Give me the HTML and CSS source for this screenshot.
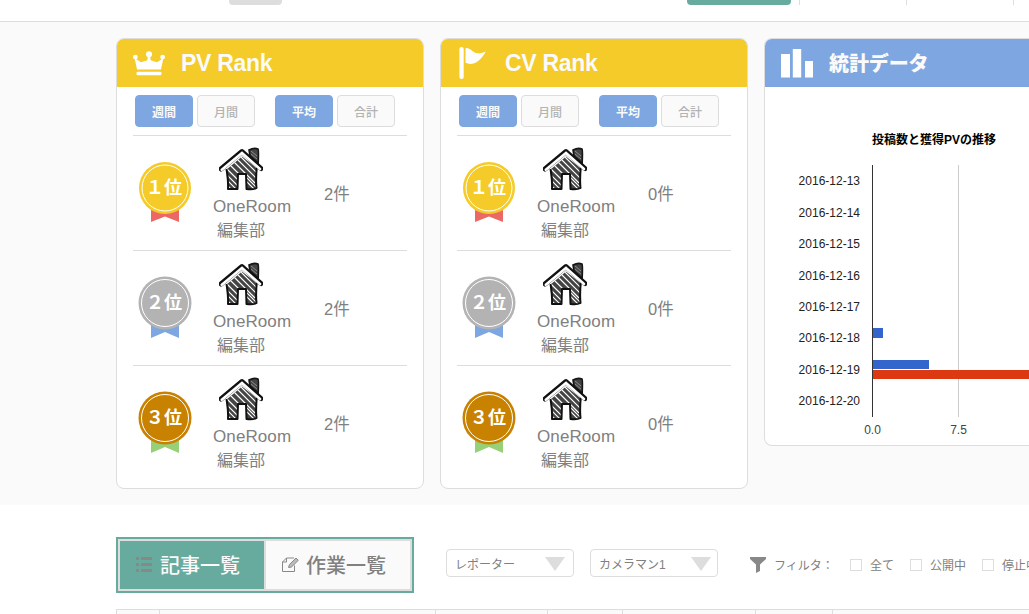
FILE: index.html
```html
<!DOCTYPE html>
<html lang="ja">
<head>
<meta charset="utf-8">
<title>OneRoom</title>
<link rel="stylesheet" href="styles.css">
</head>
<body>
<svg class="defs" aria-hidden="true">
  <clipPath id="walls"><path d="M7 23 L23 9.500 L37.500 21 L38 42 L27.500 42 L27 27 L19 27 L18.500 42 L9 42Z"/></clipPath>
  <symbol id="house" viewBox="0 0 44 44">
    <path d="M30 3 Q35 .3 39 2 Q39.800 3 39.200 16 L31 9Z" fill="#444" stroke="#161616" stroke-width="1.600"/>
    <path d="M32 4l6 5M32 7l6 5" stroke="#aaa" stroke-width=".7"/>
    <path d="M7 23 L23 9.500 L37.500 21 L38 42 L27.500 42 L27 27 L19 27 L18.500 42 L9 42Z" fill="#444"/>
    <path clip-path="url(#walls)" d="M4 34l14 14M4 29l16 16M5 25l16 16M8 22l16 16M11 18l16 16M14 14l22 22M18 12l22 22M21 9l22 22M24 7l20 20M24 31l14 14M24 27l18 18" stroke="#fff" stroke-width="1.100"/>
    <path d="M7.500 22 Q9.500 32 9 42 L18.500 42 L19 27 L27 27 L27.500 42 Q34 43 37.500 41 Q36.500 31 38 19" fill="none" stroke="#111" stroke-width="2" stroke-linejoin="round"/>
    <path d="M2 22 L23 4.500 L42 21.500" fill="none" stroke="#111" stroke-width="5" stroke-linecap="round" stroke-linejoin="round"/>
    <path d="M2.800 22.800 L23 6 L41 22" fill="none" stroke="#fff" stroke-width="2.600" stroke-linecap="round"/>
  </symbol>
</svg>

<header class="topbar">
  <i class="stub stub-grey"></i>
  <i class="stub stub-green"></i>
  <i class="sep"></i><i class="sep"></i><i class="sep"></i>
</header>

<section class="dashboard">
  <article class="card">
    <h2 class="card-head yellow">
      <svg class="head-icon" viewBox="0 0 32 32" fill="#fff"><path d="M4 22.400 1.600 11 8 15.200 14.400 13.200 15 7 17 7 17.600 13.200 24 15.200 30.400 11 28 22.400Z"/><circle cx="2.400" cy="10.100" r="2.400"/><circle cx="16" cy="7.200" r="3"/><circle cx="29.600" cy="10.100" r="2.400"/><rect x="3.500" y="24.700" width="25" height="3.600" rx="1.300"/></svg>
      <span>PV Rank</span>
    </h2>
    <div class="switches"><b class="on">週間</b><b>月間</b><b class="on second">平均</b><b>合計</b></div>
    <ul class="ranks">
      <li class="rank">
        <svg class="medal" viewBox="0 0 54 64"><path d="M13 48V61L27 55.500 41 61V48Z" fill="#ec6864"/><circle cx="27" cy="27" r="26" fill="#f4cb28"/><circle cx="27" cy="27" r="23" fill="none" stroke="#fff" stroke-width="1"/><text x="8" y="33.200">１</text><text x="26" y="33.200">位</text></svg>
        <div class="who"><svg class="house"><use href="#house"/></svg><span>OneRoom</span><span class="dept">編集部</span></div><span class="count">2件</span>
      </li>
      <li class="rank">
        <svg class="medal" viewBox="0 0 54 64"><path d="M13 48V62L27 56 41 62V48Z" fill="#7ea6e0"/><circle cx="27" cy="27" r="26.500" fill="#b3b3b3"/><circle cx="27" cy="27" r="23.500" fill="none" stroke="#fff" stroke-width="1"/><text x="8" y="33.200">２</text><text x="26" y="33.200">位</text></svg>
        <div class="who"><svg class="house"><use href="#house"/></svg><span>OneRoom</span><span class="dept">編集部</span></div><span class="count">2件</span>
      </li>
      <li class="rank">
        <svg class="medal" viewBox="0 0 54 64"><path d="M13 48V62L27 56 41 62V48Z" fill="#97d077"/><circle cx="27" cy="27" r="26.500" fill="#c88200"/><circle cx="27" cy="27" r="23.500" fill="none" stroke="#fff" stroke-width="1"/><text x="8" y="33.200">３</text><text x="26" y="33.200">位</text></svg>
        <div class="who"><svg class="house"><use href="#house"/></svg><span>OneRoom</span><span class="dept">編集部</span></div><span class="count">2件</span>
      </li>
    </ul>
  </article>

  <article class="card">
    <h2 class="card-head yellow">
      <svg class="head-icon" viewBox="0 0 32 32" fill="#fff"><rect x="2.400" y="0" width="4.300" height="32" rx="2"/><path d="M8.500 1.500C11.500-.5 15 4.800 19 6Q24 7.300 28.800 4.600C26.500 9 23 13 19.500 15.300Q14 18.300 8.500 15.800Z"/></svg>
      <span>CV Rank</span>
    </h2>
    <div class="switches"><b class="on">週間</b><b>月間</b><b class="on second">平均</b><b>合計</b></div>
    <ul class="ranks">
      <li class="rank">
        <svg class="medal" viewBox="0 0 54 64"><path d="M13 48V61L27 55.500 41 61V48Z" fill="#ec6864"/><circle cx="27" cy="27" r="26" fill="#f4cb28"/><circle cx="27" cy="27" r="23" fill="none" stroke="#fff" stroke-width="1"/><text x="8" y="33.200">１</text><text x="26" y="33.200">位</text></svg>
        <div class="who"><svg class="house"><use href="#house"/></svg><span>OneRoom</span><span class="dept">編集部</span></div><span class="count">0件</span>
      </li>
      <li class="rank">
        <svg class="medal" viewBox="0 0 54 64"><path d="M13 48V62L27 56 41 62V48Z" fill="#7ea6e0"/><circle cx="27" cy="27" r="26.500" fill="#b3b3b3"/><circle cx="27" cy="27" r="23.500" fill="none" stroke="#fff" stroke-width="1"/><text x="8" y="33.200">２</text><text x="26" y="33.200">位</text></svg>
        <div class="who"><svg class="house"><use href="#house"/></svg><span>OneRoom</span><span class="dept">編集部</span></div><span class="count">0件</span>
      </li>
      <li class="rank">
        <svg class="medal" viewBox="0 0 54 64"><path d="M13 48V62L27 56 41 62V48Z" fill="#97d077"/><circle cx="27" cy="27" r="26.500" fill="#c88200"/><circle cx="27" cy="27" r="23.500" fill="none" stroke="#fff" stroke-width="1"/><text x="8" y="33.200">３</text><text x="26" y="33.200">位</text></svg>
        <div class="who"><svg class="house"><use href="#house"/></svg><span>OneRoom</span><span class="dept">編集部</span></div><span class="count">0件</span>
      </li>
    </ul>
  </article>

  <article class="card stats">
    <h2 class="card-head blue">
      <svg class="head-icon" viewBox="0 0 32 32" fill="#fff"><path d="M0 7h9v23.500H0zM11.800 2h8.400v28.500h-8.400zM24 14h8.300v16.500H24z"/></svg>
      <span>統計データ</span>
    </h2>
    <svg class="chart" width="264" height="357" viewBox="0 0 264 357">
      <text class="title" x="107" y="57" textLength="124">投稿数と獲得PVの推移</text>
      <path d="M193.500 78v252" stroke="#ccc"/>
      <g fill="#3366cc"><rect x="108" y="241" width="10" height="10"/><rect x="108" y="273" width="56" height="9"/></g>
      <rect x="108" y="283" width="156" height="9" fill="#dc3912"/>
      <path d="M107.500 78v252" stroke="#333"/>
      <g text-anchor="end">
        <text x="95" y="98">2016-12-13</text><text x="95" y="130">2016-12-14</text><text x="95" y="161">2016-12-15</text><text x="95" y="193">2016-12-16</text><text x="95" y="224">2016-12-17</text><text x="95" y="255">2016-12-18</text><text x="95" y="287">2016-12-19</text><text x="95" y="318">2016-12-20</text>
      </g>
      <g class="axis" text-anchor="middle"><text x="107.500" y="347">0.0</text><text x="193.500" y="347">7.5</text></g>
    </svg>
  </article>
</section>

<section class="toolbar">
  <nav class="views">
    <a class="view active"><svg width="16" height="16" viewBox="0 0 16 16" fill="#888"><path d="M0 0h3v3H0zM5 0h11v3H5zM0 6h3v3H0zM5 6h11v3H5zM0 12h3v3H0zM5 12h11v3H5z"/></svg><span>記事一覧</span></a>
    <a class="view"><svg width="17" height="16" viewBox="0 0 17 16" fill="none" stroke="#888" stroke-width="1"><path d="M12.500 8.500V14.500H.5V5L4.500 1H12M4.500 1V5H.5"/><path d="M6.500 10.500 7.500 7.500 14 1 16.300 3.300 9.500 10Z" fill="#bbb"/></svg><span>作業一覧</span></a>
  </nav>
  <div class="select"><span>レポーター</span><i class="arrow"></i></div>
  <div class="select camera"><span>カメラマン1</span><i class="arrow"></i></div>
  <div class="filters">
    <svg width="16" height="16" viewBox="0 0 16 16" fill="#888"><path d="M0 0H16V2L10 7.500V14L6 16V7.500L0 2Z"/></svg>
    <span class="filter-label">フィルタ：</span>
    <label><i class="box"></i><span>全て</span></label><label><i class="box"></i><span>公開中</span></label><label><i class="box"></i><span>停止中</span></label>
  </div>
</section>
<div class="table-head"><i></i><i></i><i></i><i></i><i></i><i></i><i></i></div>
</body>
</html>
```
FILE: styles.css
```css
* { box-sizing: border-box; }
html, body { margin: 0; width: 1029px; height: 614px; overflow: hidden; }
body { background: #fff; color: #808080; font-family: "Liberation Sans", "Noto Sans CJK JP", sans-serif; }
.defs { display: block; width: 0; height: 0; }
svg { flex: none; }
h2, ul { margin: 0; padding: 0; }

.topbar { display: flex; height: 22px; padding-left: 229px; border-bottom: 1px solid #ddd; overflow: hidden; }
.stub { flex: none; height: 5px; border-radius: 0 0 4px 4px; }
.stub-grey { width: 53px; background: #ddd; }
.stub-green { width: 104px; margin-left: 405px; background: #67ab9f; }
.sep { flex: none; width: 1px; height: 5px; margin-right: 106px; background: #ddd; }
.sep:last-child { margin-right: 0; }
.stub-green + .sep { margin-left: 8px; }

.dashboard { display: flex; align-items: flex-start; gap: 16px; height: 483px; padding: 16px 0 0 116px; background: #fafafa; overflow: hidden; }
.card { flex: none; width: 308px; height: 451px; border: 1px solid #ddd; border-radius: 8px; background: #fff; overflow: hidden; }
.stats { width: 265px; height: 408px; border-right: 0; border-radius: 8px 0 0 8px; }
.card-head { display: flex; align-items: center; gap: 16px; height: 48px; padding-left: 16px; color: #fff; font-size: 23px; font-weight: bold; line-height: 48px; }
.card-head span { color: #fafafa; letter-spacing: -.3px; }
.head-icon { width: 32px; height: 32px; }
.yellow { background: #f4cb28; }
.blue { background: #7ea6e0; }
.blue span { padding-top: 2px; font-size: 20px; letter-spacing: -.1px; font-weight: 900; }

.switches { display: flex; gap: 4px; padding: 8px 0 8px 18px; }
.switches b { width: 58px; height: 32px; border: 1px solid #ddd; border-radius: 4px; background: #fafafa; color: #b3b3b3; font-size: 12px; line-height: 34px; text-align: center; font-weight: 500; }
.switches .on { border-color: #7ea6e0; background: #7ea6e0; color: #fafafa; font-weight: bold; }
.switches .second { margin-left: 16px; }

.ranks { margin: 0 16px; list-style: none; }
.rank { display: flex; height: 115px; border-top: 1px solid #ddd; }
.medal { width: 54px; height: 64px; margin: 25px 0 0 5px; }
.medal text { fill: #fff; font: bold 18px "Noto Sans CJK JP", sans-serif; }
.who { display: flex; flex-direction: column; width: 80px; margin-left: 21px; padding-top: 11px; font-size: 17px; letter-spacing: .1px; line-height: 24px; }
.house { width: 44px; height: 44px; margin: 0 0 4px 6px; }
.dept { padding-left: 4px; font-size: 16px; letter-spacing: 0; }
.count { margin: 46px 0 0 31px; font-size: 16.5px; line-height: 24px; }

.chart { display: block; fill: #222; font-size: 12px; }
.chart .title { fill: #000; font-weight: bold; }
.axis { fill: #444; }

.toolbar { display: flex; align-items: flex-start; height: 104px; padding: 32px 0 0 116px; overflow: hidden; }
.views { display: flex; flex: none; width: 298px; height: 56px; border: 2px solid #67ab9f; outline: 2px solid #ddd; outline-offset: -4px; padding: 2px; }
.view { display: flex; align-items: center; width: 144px; height: 48px; padding-left: 16px; gap: 8px; background: #fafafa; font-size: 20px; font-weight: 500; line-height: 48px; }
.view span { padding-top: 2px; }
.view + .view { width: 146px; border-left: 2px solid #ddd; gap: 7px; }
.active { background: #67ab9f; color: #fafafa; }
.select { display: flex; flex: none; justify-content: space-between; align-items: center; width: 128px; height: 28px; margin: 12px 0 0 32px; padding: 0 8px; border: 1px solid #ddd; border-radius: 4px; font-size: 12px; }
.camera { margin-left: 16px; padding-right: 6px; }
.arrow { border: solid transparent; border-width: 14px 10px 0; border-top-color: #ddd; margin-top: 1px; }
.filters { display: flex; flex: none; align-items: center; width: 247px; height: 18px; margin: 19px 0 0 32px; font-size: 12px; line-height: 18px; }
.filter-label { flex: none; width: 76px; margin-left: 8px; padding-top: 2px; white-space: nowrap; }
.filters label { display: flex; flex: none; align-items: center; margin-right: 16px; white-space: nowrap; }
.filters label span { padding-top: 2px; }
.box { width: 12px; height: 12px; margin-right: 8px; border: 1px solid #ddd; }

.table-head { display: grid; grid-template-columns: 43px 276px 112px 75px 133px 77px 197px; width: 913px; height: 5px; margin-left: 116px; border-top: 1px solid #ddd; background: #fafafa; }
.table-head i { border-left: 1px solid #ddd; }
```
